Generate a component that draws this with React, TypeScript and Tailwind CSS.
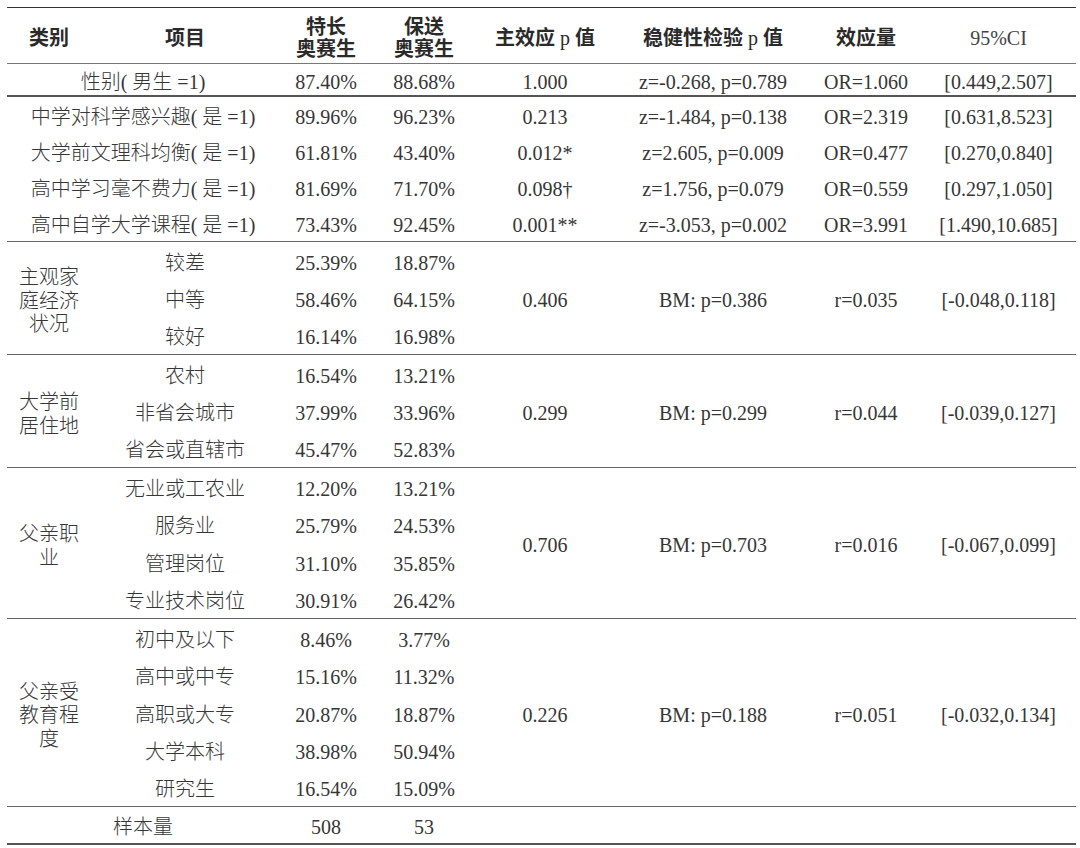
import React from "react";

const W = ["w-[84px]", "w-[188px]", "w-[94px]", "w-[102px]", "w-[140px]", "w-[196px]", "w-[110px]", "w-[155px]"];
const W12 = "w-[272px]";

type Row = { item: string; a: string; b: string };
type Group = {
  label: string[];
  rows: Row[];
  p: string;
  robust: string;
  eff: string;
  ci: string;
  h: string;
};

const binRows = [
  { t: "中学对科学感兴趣( 是 =1)", a: "89.96%", b: "96.23%", p: "0.213", r: "z=-1.484, p=0.138", e: "OR=2.319", c: "[0.631,8.523]" },
  { t: "大学前文理科均衡( 是 =1)", a: "61.81%", b: "43.40%", p: "0.012*", r: "z=2.605, p=0.009", e: "OR=0.477", c: "[0.270,0.840]" },
  { t: "高中学习毫不费力( 是 =1)", a: "81.69%", b: "71.70%", p: "0.098†", r: "z=1.756, p=0.079", e: "OR=0.559", c: "[0.297,1.050]" },
  { t: "高中自学大学课程( 是 =1)", a: "73.43%", b: "92.45%", p: "0.001**", r: "z=-3.053, p=0.002", e: "OR=3.991", c: "[1.490,10.685]" },
];

const groups: Group[] = [
  {
    label: ["主观家", "庭经济", "状况"],
    rows: [
      { item: "较差", a: "25.39%", b: "18.87%" },
      { item: "中等", a: "58.46%", b: "64.15%" },
      { item: "较好", a: "16.14%", b: "16.98%" },
    ],
    p: "0.406",
    robust: "BM: p=0.386",
    eff: "r=0.035",
    ci: "[-0.048,0.118]",
    h: "h-[113px]",
  },
  {
    label: ["大学前", "居住地"],
    rows: [
      { item: "农村", a: "16.54%", b: "13.21%" },
      { item: "非省会城市", a: "37.99%", b: "33.96%" },
      { item: "省会或直辖市", a: "45.47%", b: "52.83%" },
    ],
    p: "0.299",
    robust: "BM: p=0.299",
    eff: "r=0.044",
    ci: "[-0.039,0.127]",
    h: "h-[113px]",
  },
  {
    label: ["父亲职", "业"],
    rows: [
      { item: "无业或工农业", a: "12.20%", b: "13.21%" },
      { item: "服务业", a: "25.79%", b: "24.53%" },
      { item: "管理岗位", a: "31.10%", b: "35.85%" },
      { item: "专业技术岗位", a: "30.91%", b: "26.42%" },
    ],
    p: "0.706",
    robust: "BM: p=0.703",
    eff: "r=0.016",
    ci: "[-0.067,0.099]",
    h: "h-[151px]",
  },
  {
    label: ["父亲受", "教育程", "度"],
    rows: [
      { item: "初中及以下", a: "8.46%", b: "3.77%" },
      { item: "高中或中专", a: "15.16%", b: "11.32%" },
      { item: "高职或大专", a: "20.87%", b: "18.87%" },
      { item: "大学本科", a: "38.98%", b: "50.94%" },
      { item: "研究生", a: "16.54%", b: "15.09%" },
    ],
    p: "0.226",
    robust: "BM: p=0.188",
    eff: "r=0.051",
    ci: "[-0.032,0.134]",
    h: "h-[188px]",
  },
];

function Cell({ w, children, extra = "" }: { w: string; children: React.ReactNode; extra?: string }) {
  return (
    <div className={`${w} shrink-0 flex items-center justify-center text-center whitespace-nowrap pt-[5px] ${extra}`}>
      {children}
    </div>
  );
}

export default function App() {
  return (
    <div
      className="w-[1080px] h-[848px] bg-white pt-[7px] text-[#363636] text-[20px] leading-[23px] font-light"
      style={{ fontFamily: '"Liberation Serif", "Noto Sans CJK SC", serif' }}
    >
      <div className="ml-[7px] w-[1069px]">
        {/* header */}
        <div className="flex h-[57px] border-t-[1.5px] border-b border-t-[#333] border-b-[#777] font-bold text-[#2a2a2a]">
          <Cell w={W[0]}>类别</Cell>
          <Cell w={W[1]}>项目</Cell>
          <Cell w={W[2]}>
            <div className="leading-[22px]">特长<br />奥赛生</div>
          </Cell>
          <Cell w={W[3]}>
            <div className="leading-[22px]">保送<br />奥赛生</div>
          </Cell>
          <Cell w={W[4]}>
            <span>主效应 <span className="font-normal">p</span> 值</span>
          </Cell>
          <Cell w={W[5]}>
            <span>稳健性检验 <span className="font-normal">p</span> 值</span>
          </Cell>
          <Cell w={W[6]}>效应量</Cell>
          <Cell w={W[7]} extra="font-normal text-[#444]">95%CI</Cell>
        </div>

        {/* gender */}
        <div className="flex h-[33px] border-b-2 border-[#555]">
          <Cell w={W12}>性别( 男生 =1)</Cell>
          <Cell w={W[2]}>87.40%</Cell>
          <Cell w={W[3]}>88.68%</Cell>
          <Cell w={W[4]}>1.000</Cell>
          <Cell w={W[5]}>z=-0.268, p=0.789</Cell>
          <Cell w={W[6]}>OR=1.060</Cell>
          <Cell w={W[7]}>[0.449,2.507]</Cell>
        </div>

        {/* binary */}
        <div className="flex flex-col h-[145px] border-b border-[#666]">
          {binRows.map((r, i) => (
            <div key={i} className="flex flex-1">
              <Cell w={W12}>{r.t}</Cell>
              <Cell w={W[2]}>{r.a}</Cell>
              <Cell w={W[3]}>{r.b}</Cell>
              <Cell w={W[4]}>{r.p}</Cell>
              <Cell w={W[5]}>{r.r}</Cell>
              <Cell w={W[6]}>{r.e}</Cell>
              <Cell w={W[7]}>{r.c}</Cell>
            </div>
          ))}
        </div>

        {groups.map((g, gi) => (
          <div key={gi} className={`flex ${g.h} border-b border-[#666]`}>
            <Cell w={W[0]} extra="pt-[7px]">
              <div className="leading-[23.5px]">
                {g.label.map((l, li) => (
                  <div key={li}>{l}</div>
                ))}
              </div>
            </Cell>
            <div className="flex flex-col">
              {g.rows.map((r, ri) => (
                <div key={ri} className="flex flex-1">
                  <Cell w={W[1]}>{r.item}</Cell>
                  <Cell w={W[2]}>{r.a}</Cell>
                  <Cell w={W[3]}>{r.b}</Cell>
                </div>
              ))}
            </div>
            <Cell w={W[4]}>{g.p}</Cell>
            <Cell w={W[5]}>{g.robust}</Cell>
            <Cell w={W[6]}>{g.eff}</Cell>
            <Cell w={W[7]}>{g.ci}</Cell>
          </div>
        ))}

        {/* sample */}
        <div className="flex h-[38px] border-b-2 border-[#555]">
          <Cell w={W12}>样本量</Cell>
          <Cell w={W[2]}>508</Cell>
          <Cell w={W[3]}>53</Cell>
        </div>
      </div>
    </div>
  );
}
